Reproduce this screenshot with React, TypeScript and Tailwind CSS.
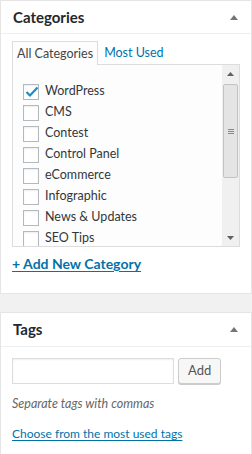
import React from 'react';

const categories = [
  { name: 'WordPress', checked: true },
  { name: 'CMS' },
  { name: 'Contest' },
  { name: 'Control Panel' },
  { name: 'eCommerce' },
  { name: 'Infographic' },
  { name: 'News & Updates' },
  { name: 'SEO Tips' },
];

function Toggle() {
  return (
    <svg width="8" height="5" viewBox="0 0 8 5" className="mr-[1px]">
      <path d="M0 5 L4 0 L8 5 Z" fill="#72777c" />
    </svg>
  );
}

function Checkbox({ checked }: { checked?: boolean }) {
  return (
    <span className="relative flex h-4 w-4 shrink-0 items-center justify-center border border-[#b4b9be] bg-white shadow-[inset_0_1px_2px_rgba(0,0,0,0.07)]">
      {checked && (
        <svg width="14" height="12" viewBox="0 0 14 12" className="absolute left-[1px] top-[1px]">
          <path d="M1.5 6 L5 9.5 L12.5 1.5" stroke="#1e8cbe" strokeWidth="2.2" fill="none" />
        </svg>
      )}
    </span>
  );
}

function Scrollbar() {
  return (
    <div className="flex w-[17px] shrink-0 flex-col bg-[#f0f0f0]">
      <div className="flex h-[17px] items-center justify-center">
        <svg width="7" height="4" viewBox="0 0 7 4">
          <path d="M0 4 L3.5 0 L7 4 Z" fill="#606060" />
        </svg>
      </div>
      <div className="mx-[1px] mt-[2px] flex h-[94px] items-center justify-center rounded-[2px] border border-[#c2c2c2] bg-[#e4e4e4]">
        <div className="flex flex-col gap-[1px]">
          <span className="block h-px w-[6px] bg-[#8a8a8a]" />
          <span className="block h-px w-[6px] bg-[#8a8a8a]" />
          <span className="block h-px w-[6px] bg-[#8a8a8a]" />
        </div>
      </div>
      <div className="flex-1" />
      <div className="flex h-[17px] items-center justify-center">
        <svg width="7" height="4" viewBox="0 0 7 4">
          <path d="M0 0 L3.5 4 L7 0 Z" fill="#606060" />
        </svg>
      </div>
    </div>
  );
}

export default function App() {
  return (
    <div className="min-h-[454px] w-[252px] bg-[#f1f1f1] font-['Lato','Open_Sans',sans-serif] text-[12px] text-[#444]">
      <div className="border border-[#e5e5e5] bg-white">
        <div className="flex h-[33px] items-center justify-between border-b border-[#eee] pl-3 pr-[12px]">
          <h2 className="text-[15px] font-bold text-[#23282d]">Categories</h2>
          <Toggle />
        </div>
        <div className="px-[11px] pt-[7px] pb-[19px]">
          <div className="flex h-[23px] items-end">
            <div className="relative -mb-px flex h-[24px] items-center border border-b-0 border-[#ddd] bg-[#fdfdfd] px-[4px] pt-[2px] text-[12.5px] text-[#444]">
              All Categories
            </div>
            <div className="flex h-[23px] items-center px-[6px] pt-[2px] text-[12.5px] text-[#0073aa]">Most Used</div>
          </div>
          <div className="flex h-[183px] border border-[#ddd] bg-[#fdfdfd]">
            <div className="flex-1 overflow-hidden pl-[10px] pt-[16px]">
              {categories.map((c) => (
                <label key={c.name} className="flex h-[21px] items-center gap-[6px] text-[12.5px] leading-none text-[#32373c]">
                  <Checkbox checked={c.checked} />
                  <span>{c.name}</span>
                </label>
              ))}
            </div>
            <Scrollbar />
          </div>
          <a className="mt-[6px] inline-block text-[14px] font-bold text-[#0073aa] underline underline-offset-2">+ Add New Category</a>
        </div>
      </div>

      <div className="h-[18px]" />

      <div className="border border-[#e5e5e5] bg-white">
        <div className="flex h-[34px] items-center justify-between border-b border-[#eee] pl-3 pr-[12px]">
          <h2 className="text-[15px] font-bold text-[#23282d]">Tags</h2>
          <Toggle />
        </div>
        <div className="px-[11px] pt-[11px] pb-[12px]">
          <div className="flex items-center gap-[4px]">
            <input className="h-[26px] w-[162px] border border-[#ddd] bg-white shadow-[inset_0_1px_2px_rgba(0,0,0,0.07)] outline-none" />
            <button className="h-[26px] rounded-[3px] border border-[#ccc] bg-[#f7f7f7] px-[9px] text-[13px] text-[#555] shadow-[0_1px_0_#ccc]">
              Add
            </button>
          </div>
          <p className="mt-[11px] text-[12.5px] italic text-[#666]">Separate tags with commas</p>
          <a className="mt-[11px] inline-block text-[12px] text-[#0073aa] underline underline-offset-2">Choose from the most used tags</a>
        </div>
      </div>
    </div>
  );
}
